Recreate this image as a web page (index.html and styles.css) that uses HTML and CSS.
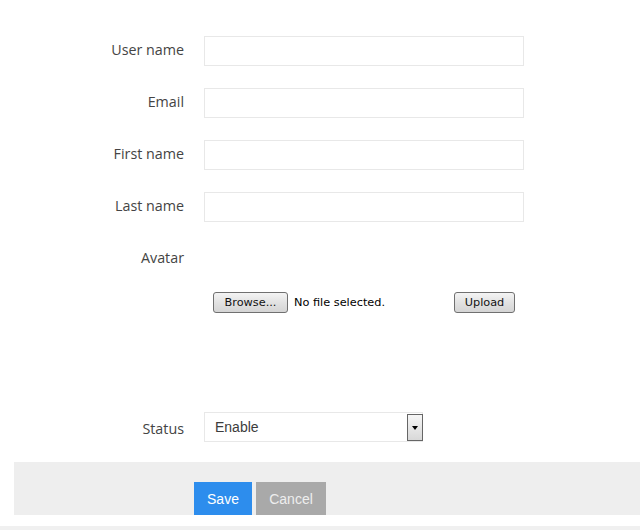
FILE: index.html
```html
<!DOCTYPE html>
<html>
<head>
<meta charset="utf-8">
<link rel="stylesheet" href="styles.css">
</head>
<body>
<div class="form">
  <div class="row"><label class="label">User name</label><div class="field"></div></div>
  <div class="row"><label class="label">Email</label><div class="field"></div></div>
  <div class="row"><label class="label">First name</label><div class="field"></div></div>
  <div class="row"><label class="label">Last name</label><div class="field"></div></div>
  <div class="row row-avatar"><label class="label">Avatar</label></div>
  <div class="upload">
    <span class="win-btn browse">Browse...</span>
    <span class="nofile">No file selected.</span>
    <span class="win-btn upload-btn">Upload</span>
  </div>
  <div class="row row-status">
    <label class="label label-status">Status</label>
    <div class="select">
      <span class="select-text">Enable</span>
      <span class="select-arrow"><span class="tri"></span></span>
    </div>
  </div>
  <div class="footer">
    <span class="btn save">Save</span>
    <span class="btn cancel">Cancel</span>
  </div>
  <div class="bottom-line"></div>
</div>
</body>
</html>
```
FILE: styles.css
```css
html, body {
  margin: 0;
  padding: 0;
  background: #fff;
}
.form {
  padding-top: 36px;
  font-family: "Open Sans", sans-serif;
  width: 640px;
}
.row {
  display: flex;
  align-items: center;
  height: 30px;
  margin-bottom: 22px;
}
.label {
  width: 184px;
  margin-right: 20px;
  text-align: right;
  font-size: 14.3px;
  color: #444;
  padding-bottom: 4px;
}
.label-status {
  padding-bottom: 0;
  padding-top: 2px;
}
.field {
  width: 318px;
  height: 28px;
  border: 1px solid #e8e8e8;
  background: #fff;
}
.row-avatar {
  margin-bottom: 18px;
}
.upload {
  display: flex;
  align-items: center;
  height: 21px;
  padding-left: 213px;
  font-family: "DejaVu Sans", sans-serif;
  font-size: 11.3px;
  color: #000;
}
.win-btn {
  display: inline-flex;
  align-items: center;
  justify-content: center;
  box-sizing: border-box;
  border: 1px solid #707070;
  border-radius: 3px;
  background: linear-gradient(#f4f4f4, #e2e2e2 50%, #d4d4d4);
  color: #111;
}
.browse {
  width: 75px;
  height: 21px;
}
.nofile {
  margin-left: 6px;
  width: 160px;
}
.upload-btn {
  width: 61px;
  height: 21px;
}
.row-status {
  margin-top: 99px;
  margin-bottom: 20px;
}
.select {
  display: flex;
  align-items: center;
  justify-content: space-between;
  width: 217px;
  height: 28px;
  border: 1px solid #e8e8e8;
}
.select-text {
  padding-left: 10px;
  font-family: "Liberation Sans", sans-serif;
  font-size: 14px;
  color: #3c3c3c;
}
.select-arrow {
  display: flex;
  align-items: center;
  justify-content: center;
  width: 14px;
  height: 25px;
  border: 1px solid #666;
  background: linear-gradient(#f6f6f6, #d8d8d8);
  margin-right: -1px;
}
.tri {
  width: 0;
  height: 0;
  border-left: 3px solid transparent;
  border-right: 3px solid transparent;
  border-top: 4px solid #000;
  margin-top: 1px;
}
.footer {
  margin-left: 14px;
  height: 53px;
  box-sizing: border-box;
  padding-top: 20px;
  padding-left: 180px;
  background: #eee;
  display: flex;
  align-items: flex-end;
  gap: 4px;
}
.btn {
  display: inline-flex;
  align-items: center;
  justify-content: center;
  height: 33px;
  font-family: "Liberation Sans", sans-serif;
  font-size: 14px;
}
.save {
  width: 58px;
  background: #2d8ded;
  color: #fff;
}
.cancel {
  width: 70px;
  background: #a9a9a9;
  color: #eee;
}
.bottom-line {
  margin-top: 11px;
  height: 4px;
  background: #f0f0f0;
}
```
